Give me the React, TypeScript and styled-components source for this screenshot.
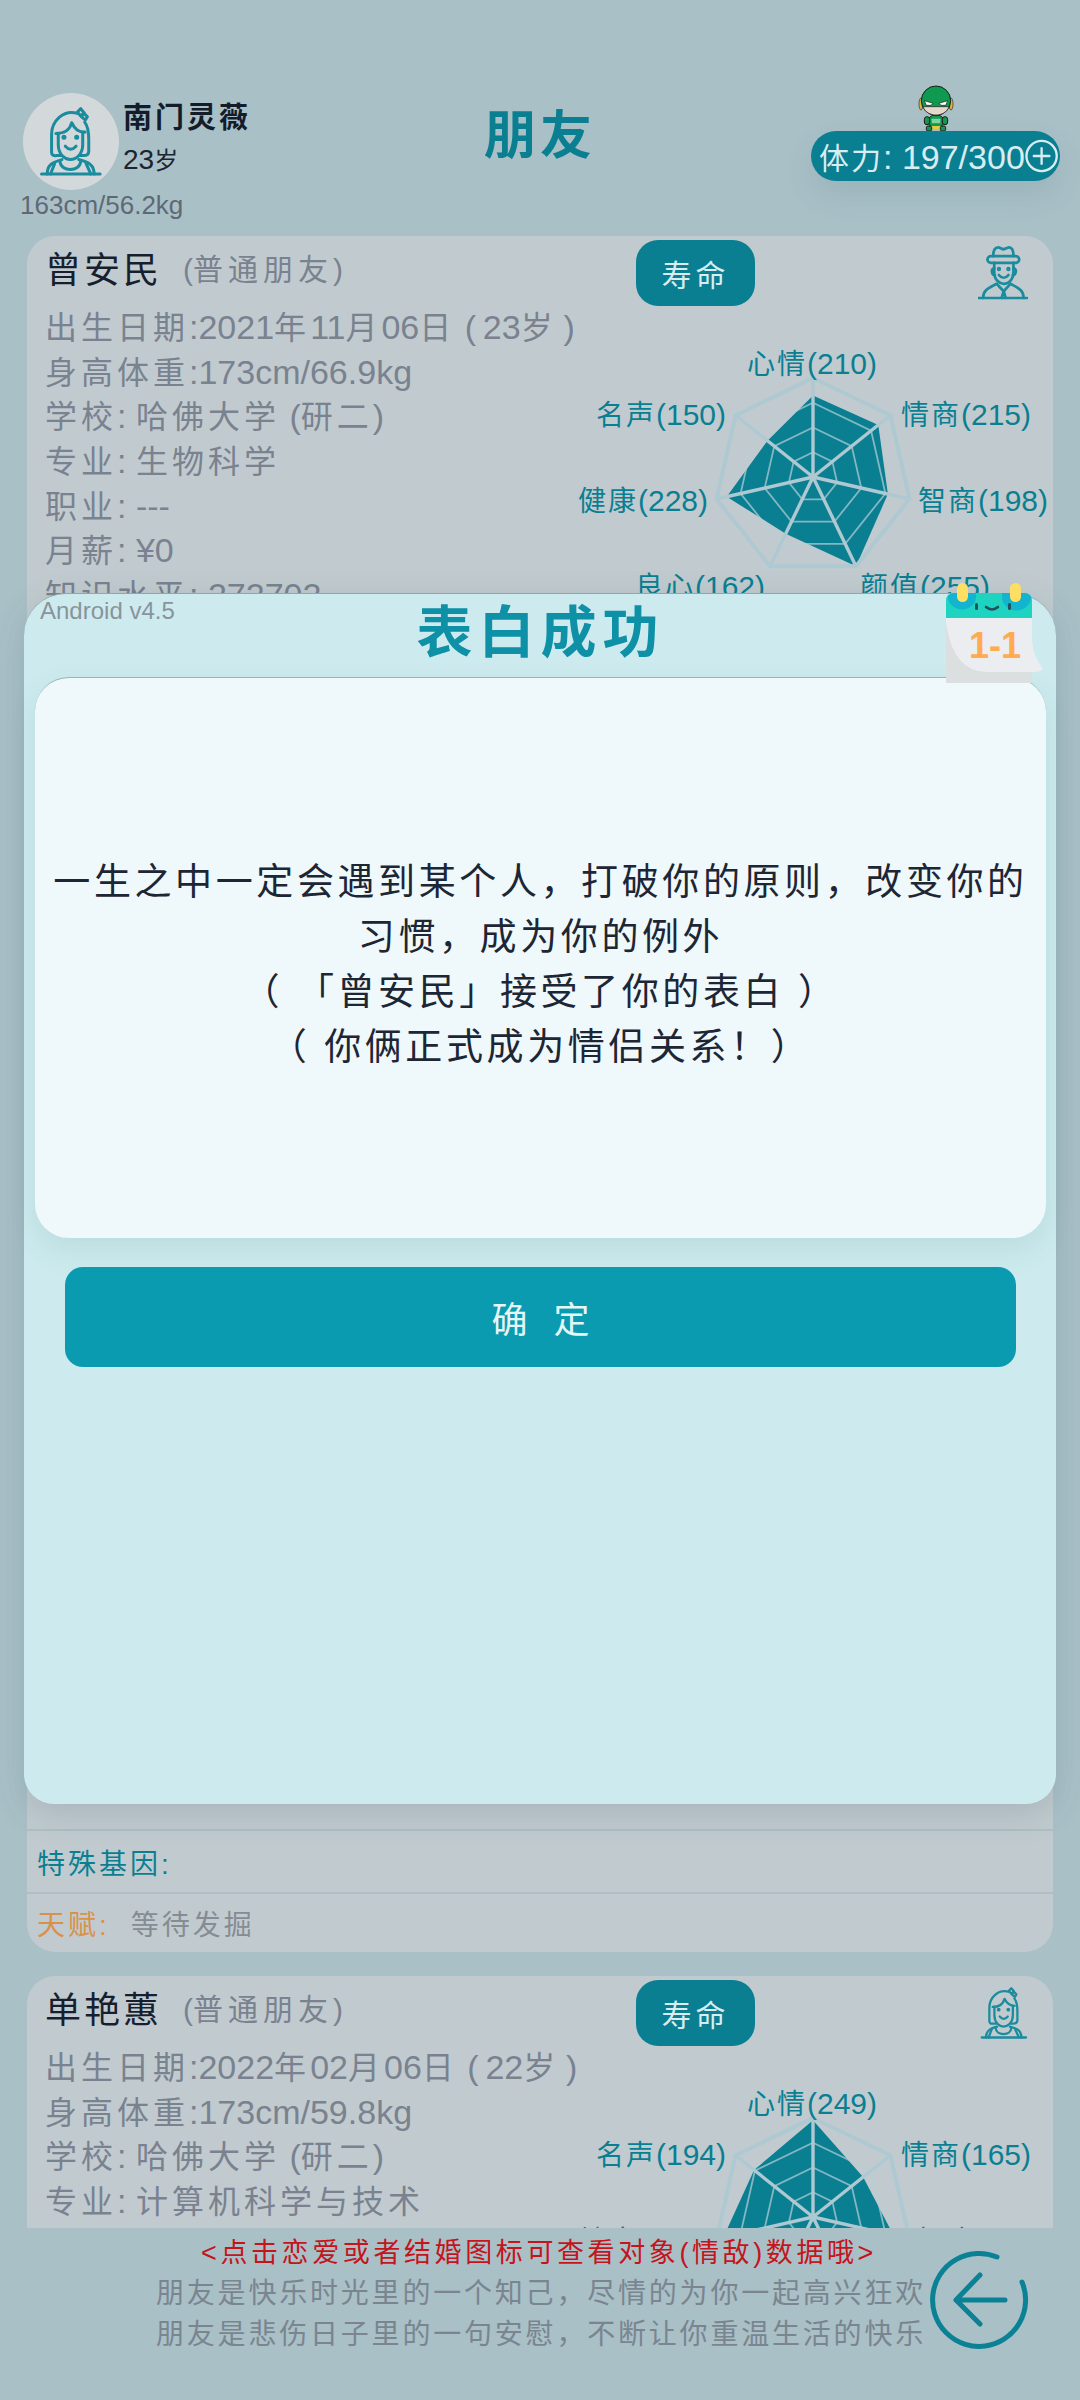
import styled, { createGlobalStyle } from 'styled-components';

const TEAL = '#0a7f92';
const GREY = '#7a828f';

const GlobalStyle = createGlobalStyle`
  html, body {
    margin: 0;
    padding: 0;
    background: #a9c0c7;
  }
  body {
    font-family: "Liberation Sans", "Noto Sans CJK SC", sans-serif;
  }
`;

const Page = styled.div`
  position: relative;
  width: 1080px;
  height: 2400px;
  overflow: hidden;
  display: flex;
  flex-direction: column;
  background: #a9c0c7;
`;

const Header = styled.header`
  height: 236px;
  box-sizing: border-box;
  padding: 85px 20px 0 20px;
  display: grid;
  grid-template-columns: 1fr auto 1fr;
  align-items: start;
`;

const Profile = styled.div`
  margin-top: 8px;
  display: flex;
  flex-direction: column;
`;

const ProfileTop = styled.div`
  display: flex;
  gap: 4px;
  margin-left: 3px;
`;

const Avatar = styled.div`
  width: 96px;
  height: 97px;
  border-radius: 50%;
  background: #d3d8db;
  display: flex;
  align-items: center;
  justify-content: center;
`;

const ProfileText = styled.div`
  display: flex;
  flex-direction: column;
  padding-top: 5px;
`;

const ProfileName = styled.div`
  font-size: 29px;
  line-height: 40px;
  font-weight: 700;
  letter-spacing: 3px;
  color: #141c2c;
`;

const ProfileAge = styled.div`
  font-size: 28px;
  line-height: 44px;
  color: #1b2433;

  span {
    font-size: 24px;
  }
`;

const ProfileStats = styled.div`
  font-size: 26px;
  line-height: 30px;
  color: #5f6875;
`;

const PageTitle = styled.h1`
  margin: 21px 0 0 0;
  font-size: 52px;
  line-height: 60px;
  font-weight: 700;
  letter-spacing: 4px;
  color: ${TEAL};
`;

const Energy = styled.div`
  justify-self: end;
  display: flex;
  flex-direction: column;
  align-items: center;
`;

const EnergyPill = styled.div`
  width: 249px;
  height: 50px;
  box-sizing: border-box;
  padding: 0 2px 0 8px;
  border-radius: 25px;
  background: ${TEAL};
  color: #d7edf1;
  font-size: 34px;
  display: flex;
  align-items: center;
  justify-content: space-between;
  white-space: nowrap;
  box-shadow: 0 14px 30px rgba(60, 90, 100, 0.12);
`;

const EnergyLabel = styled.span`
  font-size: 30px;
  letter-spacing: 2px;
`;

const List = styled.main`
  height: 1992px;
  overflow: hidden;
  padding: 0 27px;
  display: flex;
  flex-direction: column;
  gap: 24px;
`;

const Card = styled.section<{ $height: number }>`
  flex: none;
  height: ${(p) => p.$height}px;
  border-radius: 28px;
  background: #c1cbcf;
  display: flex;
  flex-direction: column;
  overflow: hidden;
`;

const CardHead = styled.div`
  height: 69px;
  flex: none;
  box-sizing: border-box;
  padding: 0 25px 0 18px;
  display: flex;
  align-items: flex-start;
`;

const FriendName = styled.div`
  width: 138px;
  margin-top: 12px;
  font-size: 36px;
  line-height: 46px;
  letter-spacing: 3px;
  color: #171f2e;
`;

const Relation = styled.div`
  width: 453px;
  margin-top: 14px;
  font-size: 30px;
  line-height: 40px;
  color: ${GREY};

  span {
    font-size: 30px;
    letter-spacing: 5px;
  }
`;

const LifeButton = styled.div`
  width: 119px;
  height: 66px;
  margin-top: 4px;
  border-radius: 22px;
  background: ${TEAL};
  color: #d7edf1;
  font-size: 30px;
  letter-spacing: 4px;
  display: flex;
  align-items: center;
  justify-content: center;
`;

const GenderSlot = styled.div`
  margin-left: auto;
  margin-top: 10px;
`;

const CardBody = styled.div`
  flex: 1;
  min-height: 0;
  display: flex;
  justify-content: space-between;
`;

const Rows = styled.div`
  flex: none;
  width: 515px;
  padding-left: 18px;
`;

const Row = styled.div`
  height: 44.7px;
  font-size: 34px;
  line-height: 44.7px;
  color: ${GREY};
  white-space: nowrap;
`;

const Han = styled.span`
  font-size: 32px;
  letter-spacing: 4px;
`;

const RadarBox = styled.div`
  position: relative;
  width: 493px;
  height: 330px;
  flex: none;
`;

const RadarSvg = styled.svg`
  position: absolute;
  left: 143px;
  top: 62px;
`;

const RadarLabel = styled.div<{ $x: number; $y: number }>`
  position: absolute;
  left: ${(p) => p.$x}px;
  top: ${(p) => p.$y}px;
  transform: translate(-50%, -50%);
  font-size: 30px;
  color: ${TEAL};
  white-space: nowrap;

  span {
    font-size: 28px;
    letter-spacing: 2px;
  }
`;

const CardRow = styled.div<{ $height: number }>`
  height: ${(p) => p.$height}px;
  flex: none;
  box-sizing: border-box;
  border-top: 2px solid #b0bfc4;
  padding-left: 10px;
  display: flex;
  align-items: center;
  font-size: 28px;
  letter-spacing: 3px;
`;

const GeneLabel = styled.span`
  color: ${TEAL};
`;

const TalentLabel = styled.span`
  color: #d9914a;
  margin-right: 21px;
`;

const TalentValue = styled.span`
  color: #868c93;
`;

const Footer = styled.footer`
  position: relative;
  z-index: 3;
  height: 172px;
  box-sizing: border-box;
  padding: 5px 0 0 150px;
  display: flex;
  align-items: flex-start;
  background: #a9c0c7;
`;

const FooterText = styled.div`
  width: 778px;
  flex: none;
  display: flex;
  flex-direction: column;
  align-items: center;
`;

const Hint = styled.div`
  font-size: 27px;
  line-height: 40px;
  letter-spacing: 3.6px;
  color: #c4141c;
  white-space: nowrap;
`;

const Quote = styled.div`
  margin-left: 4px;
  font-size: 28px;
  line-height: 41px;
  letter-spacing: 2.8px;
  color: #7a8590;
  white-space: nowrap;
`;

const BackButton = styled.svg`
  flex: none;
  margin: 7px 0 0 -8px;
`;

const Modal = styled.div`
  position: absolute;
  z-index: 2;
  left: 24px;
  top: 593px;
  width: 1032px;
  height: 1211px;
  box-sizing: border-box;
  padding: 0 10px 0 11px;
  border-top: 1px solid #8fa7aa;
  border-radius: 42px 42px 30px 30px;
  background: #cdebee;
  box-shadow: 0 10px 34px rgba(40, 70, 80, 0.16);
`;

const Version = styled.div`
  position: absolute;
  left: 16px;
  top: 1px;
  font-size: 24px;
  line-height: 32px;
  color: #88949c;
`;

const ModalTitle = styled.h2`
  margin: 0;
  height: 83px;
  font-size: 56px;
  line-height: 78px;
  font-weight: 700;
  letter-spacing: 6px;
  text-align: center;
  color: #0e90a6;
`;

const MessageBox = styled.div`
  height: 561px;
  box-sizing: border-box;
  padding: 14px 16px 0 16px;
  border-top: 1px solid #9db3b6;
  border-radius: 34px;
  background: #eff8fa;
  display: flex;
  align-items: center;
  justify-content: center;
  text-align: center;
  box-shadow: 0 12px 30px rgba(40, 90, 100, 0.1);
`;

const Message = styled.div`
  font-size: 37px;
  line-height: 55px;
  letter-spacing: 3.6px;
  color: #1d2634;
`;

const ConfirmButton = styled.div`
  width: 951px;
  height: 100px;
  margin: 29px 0 0 30px;
  border-radius: 18px;
  background: #0a9bb0;
  color: #e6f6f8;
  font-size: 36px;
  letter-spacing: 26px;
  text-indent: 26px;
  display: flex;
  align-items: center;
  justify-content: center;
`;

const CalendarBadge = styled.svg`
  position: absolute;
  left: 921px;
  top: -13px;
`;

const AXES = 7;
const R = 99;
const C = 110;

const pointAt = (index: number, r: number) => {
  const a = (index * 2 * Math.PI) / AXES;
  return [C + r * Math.sin(a), C - r * Math.cos(a)];
};

const polygon = (radii: number[]) =>
  radii.map((r, i) => pointAt(i, r).map((v) => v.toFixed(1)).join(',')).join(' ');

type Stat = { name: string; value: number; x: number; y: number };

const statPlaces = [
  { name: '心情', x: 252, y: 57 },
  { name: '情商', x: 406, y: 108 },
  { name: '智商', x: 423, y: 194 },
  { name: '颜值', x: 365, y: 280 },
  { name: '良心', x: 140, y: 280 },
  { name: '健康', x: 83, y: 194 },
  { name: '名声', x: 101, y: 108 },
];

const withValues = (values: number[]): Stat[] =>
  statPlaces.map((p, i) => ({ ...p, value: values[i] }));

const Radar = ({ stats }: { stats: Stat[] }) => (
  <RadarBox>
    <RadarSvg width={220} height={220} viewBox="0 0 220 220">
      <polygon points={polygon(stats.map((s) => (s.value / 255) * R))} fill={TEAL} />
      {[0.25, 0.5, 0.75].map((k) => (
        <polygon
          key={k}
          points={polygon(stats.map(() => R * k))}
          fill="none"
          stroke="#b6ced5"
          strokeOpacity={0.7}
          strokeWidth={1.8}
        />
      ))}
      <polygon points={polygon(stats.map(() => R))} fill="none" stroke="#aec9d2" strokeWidth={4} />
      {stats.map((s, i) => {
        const [x, y] = pointAt(i, R);
        return <line key={s.name} x1={C} y1={C} x2={x} y2={y} stroke="#aec9d2" strokeWidth={3.4} />;
      })}
    </RadarSvg>
    {stats.map((s) => (
      <RadarLabel key={s.name} $x={s.x} $y={s.y}>
        <span>{s.name}</span>({s.value})
      </RadarLabel>
    ))}
  </RadarBox>
);

const GirlIcon = ({ width, height }: { width: number; height: number }) => (
  <svg width={width} height={height} viewBox="58 40 190 212" fill="none" stroke="#1a8c9e" strokeWidth={9} strokeLinecap="round" strokeLinejoin="round">
    <path d="M172 62C130 50 95 85 95 125V178Q95 190 110 188H122" />
    <path d="M194 88C205 102 206 120 206 140V175Q206 188 190 188H180" />
    <path d="M108 122C135 122 150 110 155 90C165 110 175 118 195 118" />
    <path d="M115 122V155C115 185 135 200 151 200C168 200 188 185 188 155V120" />
    <circle cx="132" cy="133" r="3" fill="#1a8c9e" />
    <circle cx="170" cy="133" r="3" fill="#1a8c9e" />
    <path d="M136 160Q152 178 168 160" />
    <path d="M172 58L182 48L192 60L182 70Z" />
    <path d="M192 62L202 72L196 82L184 72Z" />
    <path d="M65 243H240" />
    <path d="M82 243C82 218 95 208 126 200" />
    <path d="M222 243C222 218 208 208 176 200" />
    <path d="M120 205C122 238 180 238 182 205" />
    <path d="M104 212L92 243M198 212L212 243" />
  </svg>
);

const ManIcon = () => (
  <svg width={50} height={54} viewBox="40 18 148 160" fill="none" stroke="#1a8c9e" strokeWidth={8} strokeLinecap="round" strokeLinejoin="round">
    <path d="M85 48C85 32 90 22 100 22L115 28L132 22C142 22 145 35 145 48" />
    <rect x="68" y="48" width="94" height="20" rx="10" />
    <path d="M88 68V95C88 120 105 130 116 130C130 130 145 118 145 95V68" />
    <path d="M88 84Q78 86 82 98Q84 104 90 104M145 84Q155 86 151 98Q149 104 143 104" />
    <circle cx="102" cy="86" r="2.5" fill="#1a8c9e" />
    <circle cx="130" cy="86" r="2.5" fill="#1a8c9e" />
    <path d="M102 104Q116 120 130 104" />
    <path d="M42 172H185" />
    <path d="M55 172C55 148 72 142 95 130L116 152L136 130C158 142 175 148 175 172" />
    <path d="M116 152L110 172M116 152L122 172" />
  </svg>
);

const HeroSprite = () => (
  <svg width={40} height={46} viewBox="45 15 120 138">
    <ellipse cx="60" cy="72" rx="6" ry="18" fill="#d9b43c" stroke="#2a2a2a" strokeWidth={2} />
    <ellipse cx="150" cy="72" rx="6" ry="18" fill="#d9b43c" stroke="#2a2a2a" strokeWidth={2} />
    <ellipse cx="105" cy="124" rx="24" ry="20" fill="#0f9a50" stroke="#1b1b1b" strokeWidth={3} />
    <rect x="70" y="110" width="16" height="24" rx="8" fill="#0f9a50" stroke="#1b1b1b" strokeWidth={3} />
    <rect x="124" y="110" width="16" height="24" rx="8" fill="#0f9a50" stroke="#1b1b1b" strokeWidth={3} />
    <rect x="92" y="116" width="26" height="14" rx="2" fill="#7fd39d" />
    <path d="M86 138H124L116 148H94Z" fill="#e3cf3e" />
    <rect x="76" y="138" width="16" height="15" rx="5" fill="#0f9a50" stroke="#1b1b1b" strokeWidth={3} />
    <rect x="118" y="138" width="16" height="15" rx="5" fill="#0f9a50" stroke="#1b1b1b" strokeWidth={3} />
    <circle cx="105" cy="62" r="44" fill="#0f9a50" stroke="#1b1b1b" strokeWidth={3} />
    <path d="M66 80H144C138 96 122 105 105 105C88 105 72 96 66 80Z" fill="#e6d8ca" stroke="#1b1b1b" strokeWidth={2} />
    <path d="M70 62L96 70L90 76H76Z" fill="#fff" stroke="#1b1b1b" strokeWidth={2} />
    <path d="M140 62L114 70L120 76H134Z" fill="#fff" stroke="#1b1b1b" strokeWidth={2} />
  </svg>
);

const PlusCircle = () => (
  <svg width={34} height={34} viewBox="0 0 34 34" fill="none" stroke="#d7edf1" strokeWidth={2.4} strokeLinecap="round">
    <circle cx="17" cy="17" r="15.5" />
    <path d="M17 9V25M9 17H25" />
  </svg>
);

const BackIcon = () => (
  <BackButton width={120} height={120} viewBox="0 0 120 120" fill="none" stroke="#0a8194" strokeWidth={5} strokeLinecap="round" strokeLinejoin="round">
    <path d="M77 17A46.5 46.5 0 1 0 102 42" />
    <path d="M60 35L36 60L60 84M36 60H85" />
  </BackButton>
);

const CalendarIcon = () => (
  <CalendarBadge width={102} height={104} viewBox="0 0 102 104">
    <rect x="1" y="37" width="86" height="65" fill="#dcdfe0" />
    <path d="M1 37H87V60Q88 75 98 88Q95 91 90 91H42Q8 91 1 42Z" fill="#ebedf1" />
    <path d="M1 37V20Q1 12 9 12H79Q87 12 87 20V37Z" fill="#1fd3c1" />
    <path d="M3 15Q6 12 9 12H31V16A14 13 0 0 1 3 15Z" fill="#12b4cf" />
    <path d="M57 12H79Q84 12 86 16A14 13 0 0 1 57 16Z" fill="#12b4cf" />
    <rect x="12" y="2" width="11" height="19" rx="5.5" fill="#ffdf63" />
    <rect x="65" y="2" width="11" height="19" rx="5.5" fill="#ffdf63" />
    <rect x="30" y="22" width="3" height="7" rx="1.5" fill="#24505c" />
    <rect x="63" y="22" width="3" height="7" rx="1.5" fill="#24505c" />
    <path d="M41 26Q47 31 53 26" fill="none" stroke="#24505c" strokeWidth={2.6} strokeLinecap="round" />
    <text x="50" y="77" textAnchor="middle" fontFamily="Liberation Sans" fontWeight={700} fontSize={36} fill="#ffab4f">1-1</text>
  </CalendarBadge>
);

const App = () => (
  <Page>
    <GlobalStyle />
    <Header>
      <Profile>
        <ProfileTop>
          <Avatar>
            <GirlIcon width={64} height={71} />
          </Avatar>
          <ProfileText>
            <ProfileName>南门灵薇</ProfileName>
            <ProfileAge>
              23<span>岁</span>
            </ProfileAge>
          </ProfileText>
        </ProfileTop>
        <ProfileStats>163cm/56.2kg</ProfileStats>
      </Profile>
      <PageTitle>朋友</PageTitle>
      <Energy>
        <HeroSprite />
        <EnergyPill>
          <span>
            <EnergyLabel>体力</EnergyLabel>: 197/300
          </span>
          <PlusCircle />
        </EnergyPill>
      </Energy>
    </Header>

    <List>
      <Card $height={1716}>
        <CardHead>
          <FriendName>曾安民</FriendName>
          <Relation>
            (<span>普通朋友</span>)
          </Relation>
          <LifeButton>寿命</LifeButton>
          <GenderSlot>
            <ManIcon />
          </GenderSlot>
        </CardHead>
        <CardBody>
          <Rows>
            <Row>
              <Han>出生日期</Han>:2021<Han>年</Han>11<Han>月</Han>06<Han>日</Han> (&#8201;23<Han>岁</Han>&#8201;)
            </Row>
            <Row>
              <Han>身高体重</Han>:173cm/66.9kg
            </Row>
            <Row>
              <Han>学校</Han>: <Han>哈佛大学</Han> (<Han>研二</Han>)
            </Row>
            <Row>
              <Han>专业</Han>: <Han>生物科学</Han>
            </Row>
            <Row>
              <Han>职业</Han>: ---
            </Row>
            <Row>
              <Han>月薪</Han>: ¥0
            </Row>
            <Row>
              <Han>知识水平</Han>: 272702
            </Row>
          </Rows>
          <Radar stats={withValues([210, 215, 198, 255, 162, 228, 150])} />
        </CardBody>
        <CardRow $height={63}>
          <GeneLabel>特殊基因:</GeneLabel>
        </CardRow>
        <CardRow $height={60}>
          <TalentLabel>天赋:</TalentLabel>
          <TalentValue>等待发掘</TalentValue>
        </CardRow>
      </Card>

      <Card $height={700}>
        <CardHead>
          <FriendName>单艳蕙</FriendName>
          <Relation>
            (<span>普通朋友</span>)
          </Relation>
          <LifeButton>寿命</LifeButton>
          <GenderSlot>
            <GirlIcon width={48} height={54} />
          </GenderSlot>
        </CardHead>
        <CardBody>
          <Rows>
            <Row>
              <Han>出生日期</Han>:2022<Han>年</Han>02<Han>月</Han>06<Han>日</Han> (&#8201;22<Han>岁</Han>&#8201;)
            </Row>
            <Row>
              <Han>身高体重</Han>:173cm/59.8kg
            </Row>
            <Row>
              <Han>学校</Han>: <Han>哈佛大学</Han> (<Han>研二</Han>)
            </Row>
            <Row>
              <Han>专业</Han>: <Han>计算机科学与技术</Han>
            </Row>
          </Rows>
          <Radar stats={withValues([249, 165, 213, 200, 180, 237, 194])} />
        </CardBody>
      </Card>
    </List>

    <Footer>
      <FooterText>
        <Hint>&lt;点击恋爱或者结婚图标可查看对象(情敌)数据哦&gt;</Hint>
        <Quote>朋友是快乐时光里的一个知己，尽情的为你一起高兴狂欢</Quote>
        <Quote>朋友是悲伤日子里的一句安慰，不断让你重温生活的快乐</Quote>
      </FooterText>
      <BackIcon />
    </Footer>

    <Modal>
      <Version>Android v4.5</Version>
      <ModalTitle>表白成功</ModalTitle>
      <MessageBox>
        <Message>
          一生之中一定会遇到某个人，打破你的原则，改变你的习惯，成为你的例外
          <br />
          （ 「曾安民」接受了你的表白 ）
          <br />
          （ 你俩正式成为情侣关系！）
        </Message>
      </MessageBox>
      <ConfirmButton>确定</ConfirmButton>
      <CalendarIcon />
    </Modal>
  </Page>
);

export default App;
